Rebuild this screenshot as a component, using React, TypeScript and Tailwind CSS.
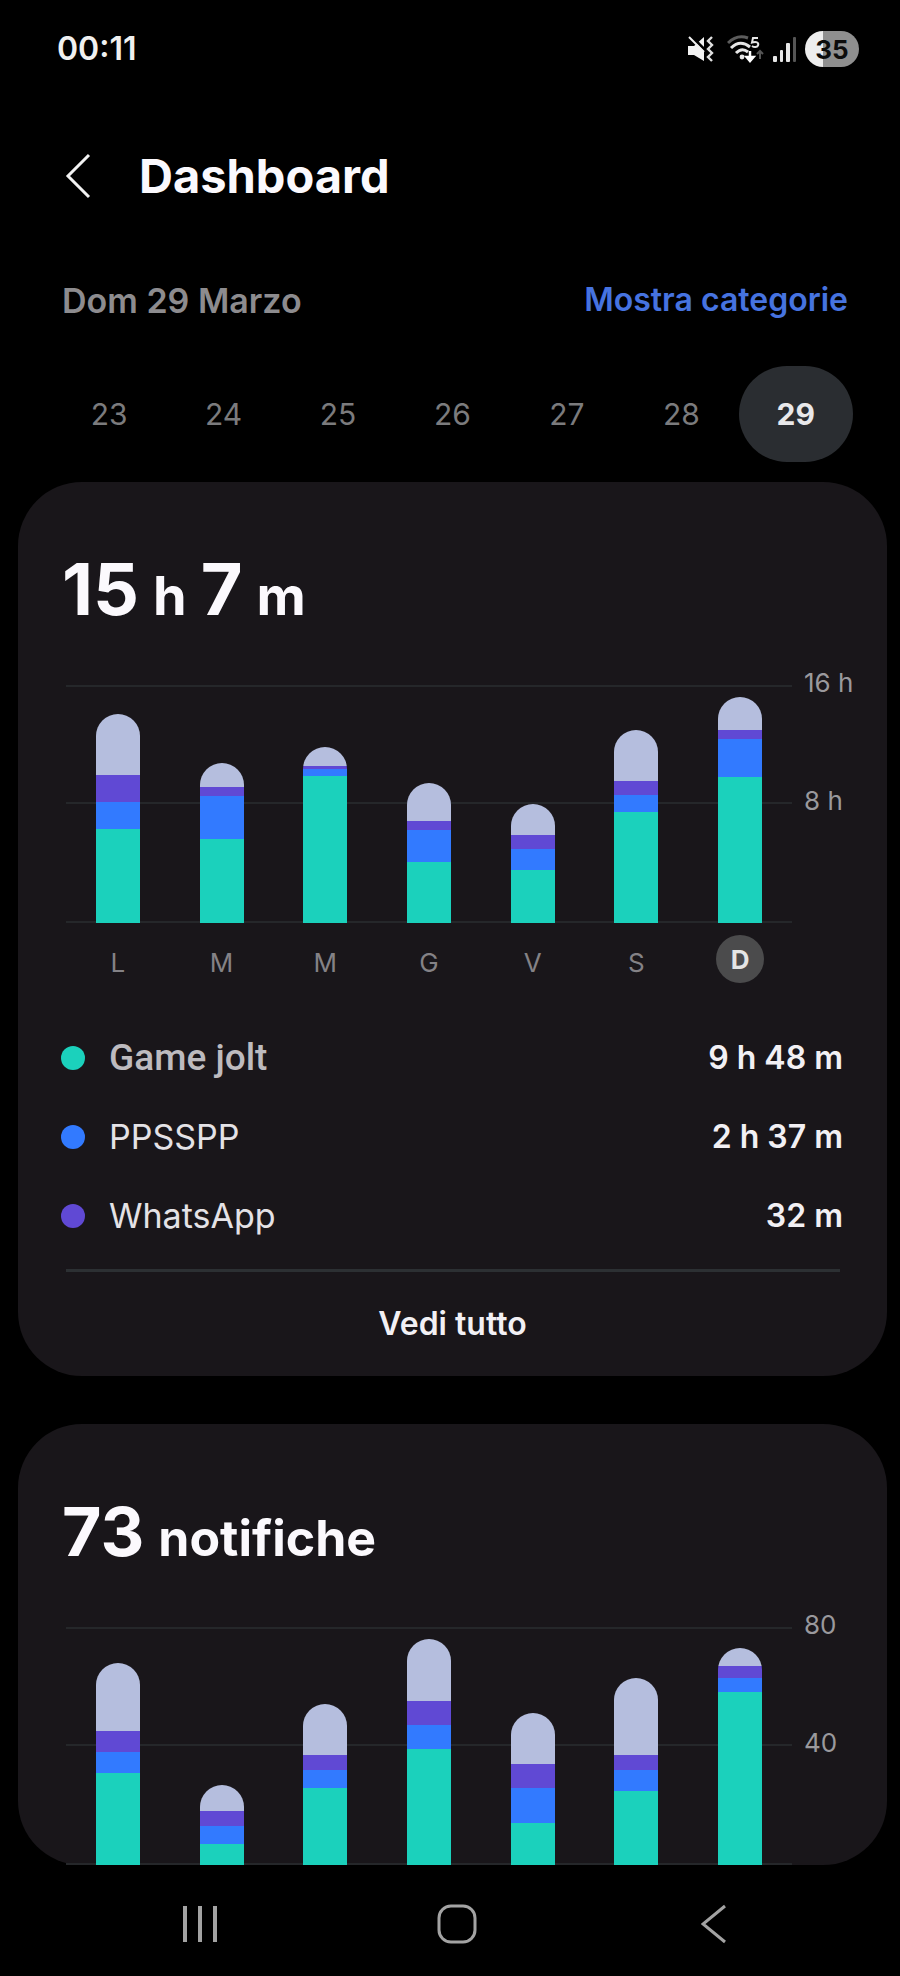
import React from "react";

type Bar = { label: string; values: [number, number, number, number] };

// bottom to top: first app, second app, third app, everything else
const SEGMENTS = ["bg-[#1bd1bc]", "bg-[#327aff]", "bg-[#6049d4]", "bg-[#b5bede]"];

const DAYS = [23, 24, 25, 26, 27, 28, 29];
const SELECTED_DAY = 29;

const SCREEN_TIME: Bar[] = [
  { label: "L", values: [379, 111, 109, 246] },
  { label: "M", values: [340, 171, 36, 100] },
  { label: "M", values: [592, 30, 13, 76] },
  { label: "G", values: [246, 128, 39, 151] },
  { label: "V", values: [212, 85, 58, 126] },
  { label: "S", values: [447, 70, 55, 207] },
  { label: "D", values: [588, 155, 34, 134] },
];

const NOTIFICATIONS: Bar[] = [
  { label: "L", values: [31, 7, 7, 23] },
  { label: "M", values: [7, 6, 5, 9] },
  { label: "M", values: [26, 6, 5, 17] },
  { label: "G", values: [39, 8, 8, 21] },
  { label: "V", values: [14, 12, 8, 17] },
  { label: "S", values: [25, 7, 5, 26] },
  { label: "D", values: [58, 5, 4, 6] },
];

const APPS = [
  { name: "Game jolt", time: "9 h 48 m", dot: "bg-[#1bd1bc]", text: "font-[Roboto] font-medium text-[37px] text-[#bdbbbf]" },
  { name: "PPSSPP", time: "2 h 37 m", dot: "bg-[#327aff]", text: "text-[34px] text-[#e4e2e6]" },
  { name: "WhatsApp", time: "32 m", dot: "bg-[#6049d4]", text: "text-[34px] text-[#e4e2e6]" },
];

const StatusBar = () => (
  <div className="flex h-[98px] items-center justify-between pl-[57px] pr-[41px]">
    <span className="text-[32px] font-semibold text-[#f0f0f0]">00:11</span>
    <div className="flex items-center gap-2">
      <svg width="28" height="26" viewBox="0 0 28 26" fill="none" aria-label="Silenzioso">
        <path d="M1 10h6L17 1v24L7 19H1z" fill="#f2f2f2" />
        <path d="M5 1l14 14" stroke="#000" strokeWidth="3" />
        <path d="M2 1l15 15" stroke="#f2f2f2" strokeWidth="2" />
        <path d="M25 1l-4 4 4 4-4 4 4 4-4 4 4 4" stroke="#e0e0e0" strokeWidth="2.4" />
      </svg>
      <svg width="38" height="28" viewBox="0 0 38 28" fill="none" className="ml-1" aria-label="Wi-Fi">
        <path d="M1 8Q10-1 21 3" stroke="#5c5c5c" strokeWidth="3" />
        <path d="M4 13Q13 4 23 12" stroke="#e6e6e6" strokeWidth="3" />
        <path d="M9 18Q15 12 21 17" stroke="#e6e6e6" strokeWidth="3" />
        <circle cx="15" cy="22" r="2.4" fill="#e6e6e6" />
        <path d="M31 3h-5l-1 4.500c5-1.500 7 .5 6 3-1 2-4 2-6 .5" stroke="#e6e6e6" strokeWidth="2" />
        <path d="M23 16v8M19.500 22l3.500 4 3.500-4z" stroke="#fff" strokeWidth="2.500" fill="#fff" />
        <path d="M33 24v-8M30 19l3-3 3 3" stroke="#555" strokeWidth="2" />
      </svg>
      <svg width="24" height="26" viewBox="0 0 24 26" aria-label="Segnale">
        <rect x="0" y="20" width="4" height="6" rx="1" fill="#e6e6e6" />
        <rect x="7" y="14" width="3" height="12" rx="1" fill="#e6e6e6" />
        <rect x="13" y="7" width="4" height="19" rx="1" fill="#e6e6e6" />
        <rect x="20" y="1" width="3" height="25" rx="1" fill="#555" />
      </svg>
      <span className="flex h-9 w-[54px] items-center justify-center rounded-full bg-linear-to-r from-[#ededed] from-34% to-[#8f8f8f] to-34% text-[26px] font-bold text-[#0c0c0c]">
        35
      </span>
    </div>
  </div>
);

type ChartProps = {
  bars: Bar[];
  max: number;
  ticks: [string, string];
};

const StackedChart = ({ bars, max, ticks }: ChartProps) => (
  <div className="flex">
    <div className="grid h-[238px] flex-1">
      <div className="col-start-1 row-start-1 grid grid-rows-2 border-y-2 border-[#25272a]">
        <div className="border-b-2 border-[#25272a]" />
      </div>
      <div className="col-start-1 row-start-1 grid h-[238px] grid-cols-7">
        {bars.map((bar, i) => (
          <div key={i} className="flex h-full items-end justify-center">
            <div
              className="flex w-11 flex-col-reverse overflow-hidden rounded-t-full"
              style={{ height: `${(bar.values.reduce((a, b) => a + b, 0) / max) * 100}%` }}
            >
              {bar.values.map((value, s) => (
                <div key={s} className={SEGMENTS[s]} style={{ flex: `${value} 0 0` }} />
              ))}
            </div>
          </div>
        ))}
      </div>
    </div>
    <div className="-mt-4 flex w-[95px] flex-col gap-[90px] pl-3 text-[26px] leading-7 text-[#9a999d]">
      {ticks.map((tick) => (
        <span key={tick}>{tick}</span>
      ))}
    </div>
  </div>
);

const NavBar = () => (
  <nav className="grid h-[110px] grid-cols-3 items-center pt-2 pr-[58px] pl-[71px]">
    <button aria-label="Recenti" className="flex justify-center">
      <svg width="38" height="38" viewBox="0 0 38 38" stroke="#a3a3a3" strokeWidth="4">
        <path d="M4 1v36M19 1v36M34 1v36" />
      </svg>
    </button>
    <button aria-label="Home" className="flex justify-center">
      <svg width="40" height="40" viewBox="0 0 40 40" fill="none" stroke="#a3a3a3" strokeWidth="3">
        <rect x="2" y="2" width="36" height="36" rx="12" />
      </svg>
    </button>
    <button aria-label="Indietro" className="flex justify-center">
      <svg width="26" height="40" viewBox="0 0 26 40" fill="none" stroke="#a3a3a3" strokeWidth="3">
        <path d="M24 2L2 20l22 18" />
      </svg>
    </button>
  </nav>
);

const App = () => {
  return (
    <div className="flex min-h-screen flex-col bg-black font-[Inter,sans-serif] text-[#fbf9fd]">
      <StatusBar />

      <header className="flex h-[156px] items-center gap-12 pl-16">
        <button aria-label="Indietro">
          <svg width="27" height="46" viewBox="0 0 27 46" fill="none" stroke="#f2f2f2" strokeWidth="3">
            <path d="M25 2L4 23l21 21" />
          </svg>
        </button>
        <h1 className="text-[47px] font-bold">Dashboard</h1>
      </header>

      <div className="flex h-[92px] items-center justify-between pl-[62px] pr-[52px]">
        <span className="text-[34px] font-semibold text-[#8d8c8f]">Dom 29 Marzo</span>
        <button className="text-[32px] font-semibold text-[#4673e0]">Mostra categorie</button>
      </div>

      <div className="mt-5 grid h-24 grid-cols-7 pl-[52px] pr-[47px]">
        {DAYS.map((day) => (
          <button
            key={day}
            aria-pressed={day === SELECTED_DAY}
            className={
              day === SELECTED_DAY
                ? "rounded-full bg-[#2a2d31] text-[30px] font-bold text-[#e8e8ea]"
                : "rounded-full text-[30px] text-[#7b7b7d]"
            }
          >
            {day}
          </button>
        ))}
      </div>

      <main className="mt-5 ml-[18px] mr-[13px] flex flex-col gap-12">
        <section className="rounded-[64px] bg-[#19161a] pt-[67px]">
          <h2 className="mb-14 flex h-20 items-baseline gap-3.5 pl-11 text-7xl leading-[80px] font-bold">
            15 <span className="text-[54px]">h</span> 7 <span className="text-[54px]">m</span>
          </h2>
          <div className="pl-12">
            <StackedChart bars={SCREEN_TIME} max={960} ticks={["16 h", "8 h"]} />
            <div className="mt-3 mr-[95px] grid h-12 grid-cols-7 place-items-center">
              {SCREEN_TIME.map((bar, i) => (
                <span
                  key={i}
                  className={
                    i === SCREEN_TIME.length - 1
                      ? "flex size-12 items-center justify-center rounded-full bg-[#4b4b4c] text-[26px] font-bold text-[#e4e4e4]"
                      : "pt-1.5 text-[26px] text-[#848286]"
                  }
                >
                  {bar.label}
                </span>
              ))}
            </div>
          </div>

          <ul className="mt-[35px] pr-[44px] pl-[43px]">
            {APPS.map((app) => (
              <li key={app.name} className="flex h-[79px] items-center">
                <span className={`size-6 rounded-full ${app.dot}`} />
                <span className={`ml-6 flex-1 ${app.text}`}>{app.name}</span>
                <span className="text-[32px] font-semibold text-[#f2f0f4]">{app.time}</span>
              </li>
            ))}
          </ul>

          <div className="mt-3.5 mr-[47px] ml-12 border-t-3 border-[#2c3033]" />
          <button className="h-[104px] w-full text-[32px] font-semibold text-[#f2f0f4]">Vedi tutto</button>
        </section>

        <section className="rounded-[64px] bg-[#19161a] pt-[67px]">
          <h2 className="mb-14 flex h-20 items-baseline gap-3.5 pl-11 text-[68px] leading-[80px] font-bold">
            73 <span className="text-[50px]">notifiche</span>
          </h2>
          <div className="pl-12">
            <StackedChart bars={NOTIFICATIONS} max={80} ticks={["80", "40"]} />
          </div>
        </section>
      </main>

      <NavBar />
    </div>
  );
};

export default App;
